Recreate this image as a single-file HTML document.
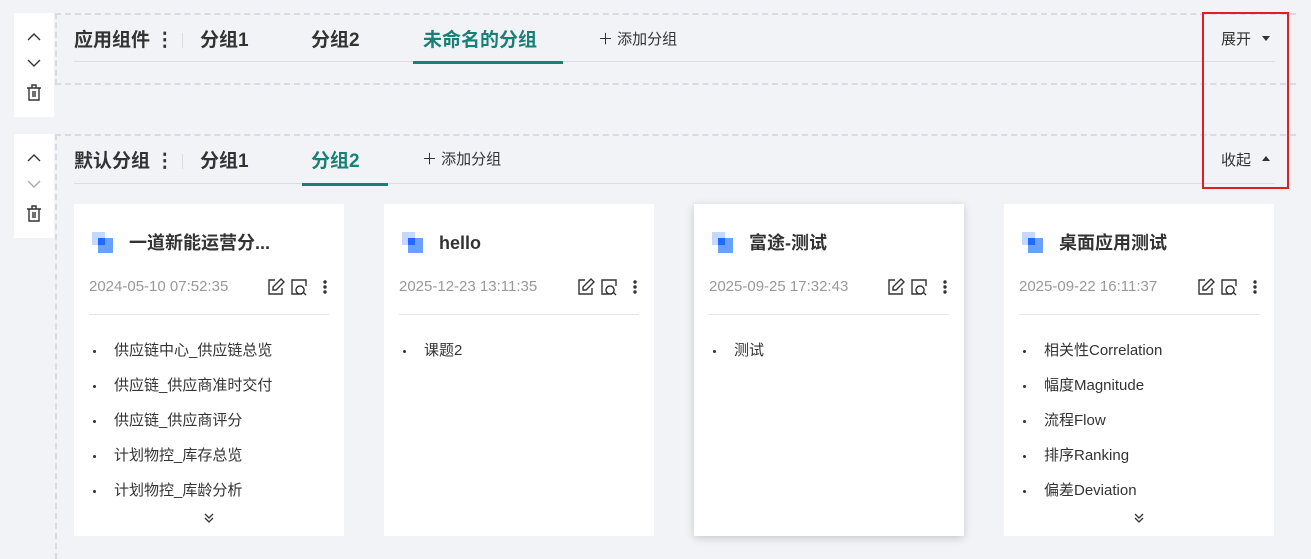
<!DOCTYPE html><html><head><meta charset="utf-8"><style>
*{box-sizing:border-box;margin:0;padding:0}
html{width:1311px;height:559px;overflow:hidden}
body{width:1311px;height:559px;background:#f2f3f7;font-family:"Liberation Sans","Noto Sans CJK SC",sans-serif;position:relative;overflow:hidden;color:#333}
.a{position:absolute}
.ctrl{background:#fff;width:40px;height:104px;left:14px}
.dash{border:2px dashed #d9dbe0;border-right:none}
.tab{font-size:19px;font-weight:bold;color:#333;line-height:24px}
.hl{height:1px;background:#dcdde0;left:74px;width:1201px}
.card{background:#fff;width:270px;height:332px;top:204px}
.card h3{position:absolute;left:55px;top:27px;font-size:18px;font-weight:bold;color:#333;line-height:24px}
.ic{position:absolute;left:18px;top:28px;width:22px;height:22px}
.dt{position:absolute;left:15px;top:73px;font-size:15px;color:#999;line-height:20px}
.sep{position:absolute;left:15px;right:15px;top:110px;height:1px;background:#e3e4e7}
.li{position:absolute;left:40px;font-size:15px;color:#333;line-height:20px}
.li:before{content:"";position:absolute;left:-21px;top:9px;width:3px;height:3px;border-radius:50%;background:#333}
</style></head><body>
<div class="a ctrl" style="top:13px"></div>
<div class="a ctrl" style="top:134px"></div>
<svg class="a" style="left:24px;top:30px" width="20" height="80" fill="none" stroke="#333" stroke-width="1.4"><path d="M4 10 L10 4 L16 10"/><path d="M4 30 L10 36 L16 30"/><path d="M3 58 H17 M8 58 V55 H12 V58 M5 58 V70 H15 V58 M9 61 V67 M11 61 V67"/></svg>
<svg class="a" style="left:24px;top:151px" width="20" height="80" fill="none" stroke-width="1.4"><path d="M4 10 L10 4 L16 10" stroke="#333"/><path d="M4 30 L10 36 L16 30" stroke="#aaa"/><path d="M3 58 H17 M8 58 V55 H12 V58 M5 58 V70 H15 V58 M9 61 V67 M11 61 V67" stroke="#333"/></svg>
<div class="a dash" style="left:55px;top:13px;width:1241px;height:72px"></div>
<div class="a dash" style="left:55px;top:134px;width:1241px;height:435px"></div>
<div class="a hl" style="top:61px"></div>
<div class="a hl" style="top:183px"></div>
<div class="a tab" style="left:74px;top:29px">应用组件 ⋮</div>
<div class="a" style="left:182px;top:33px;width:1px;height:15px;background:#ddd"></div>
<div class="a tab" style="left:200px;top:29px">分组1</div>
<div class="a tab" style="left:311px;top:29px">分组2</div>
<div class="a tab" style="left:423px;top:29px;color:#1a8077">未命名的分组</div>
<div class="a" style="left:413px;top:61px;width:150px;height:3px;background:#1a8077"></div>
<div class="a" style="left:598px;top:30px;font-size:15px;line-height:20px">＋ 添加分组</div>
<div class="a" style="left:1221px;top:30px;font-size:15px;line-height:20px">展开</div>
<svg class="a" style="left:1261px;top:35px" width="10" height="8"><path d="M1 1 H9 L5 6 Z" fill="#333"/></svg>
<div class="a tab" style="left:74px;top:150px">默认分组 ⋮</div>
<div class="a" style="left:182px;top:154px;width:1px;height:15px;background:#ddd"></div>
<div class="a tab" style="left:200px;top:150px">分组1</div>
<div class="a tab" style="left:311px;top:150px;color:#1a8077">分组2</div>
<div class="a" style="left:302px;top:183px;width:86px;height:3px;background:#1a8077"></div>
<div class="a" style="left:422px;top:150px;font-size:15px;line-height:20px">＋ 添加分组</div>
<div class="a" style="left:1221px;top:151px;font-size:15px;line-height:20px">收起</div>
<svg class="a" style="left:1261px;top:155px" width="10" height="8"><path d="M1 6 H9 L5 1 Z" fill="#333"/></svg>
<div class="a" style="left:1202px;top:12px;width:87px;height:177px;border:2px solid #e02020"></div>

<div class="a card" style="left:74px">
<svg class="ic" viewBox="0 0 22 22"><rect x="0" y="0" width="13" height="13" fill="#c5d9ff"/><rect x="6" y="6" width="15" height="15" fill="#6aa0ff"/><rect x="6" y="6" width="7" height="7" fill="#1f6bff"/></svg>
<h3>一道新能运营分...</h3><div class="dt">2024-05-10 07:52:35</div>
<svg class="a" style="left:193px;top:73px" width="62" height="20" fill="none" stroke="#333" stroke-width="1.4"><path d="M8 3 H2 V17 H15 V11 M14 2 L17 5 L9 13 H6 V10 Z"/><path d="M35 17 H25 V3 H39 V9 M33 9 a4 4 0 1 0 .1 0 M36 15 L39 18"/><circle cx="58" cy="5" r="1" fill="#333"/><circle cx="58" cy="10" r="1" fill="#333"/><circle cx="58" cy="15" r="1" fill="#333"/></svg>
<div class="sep"></div>
<div class="li" style="top:137px">供应链中心_供应链总览</div><div class="li" style="top:172px">供应链_供应商准时交付</div><div class="li" style="top:207px">供应链_供应商评分</div><div class="li" style="top:242px">计划物控_库存总览</div><div class="li" style="top:277px">计划物控_库龄分析</div>
<svg class="a" style="left:129px;top:308px" width="12" height="12" fill="none" stroke="#333" stroke-width="1.3"><path d="M2 2 L6 6 L10 2 M2 6 L6 10 L10 6"/></svg></div>

<div class="a card" style="left:384px">
<svg class="ic" viewBox="0 0 22 22"><rect x="0" y="0" width="13" height="13" fill="#c5d9ff"/><rect x="6" y="6" width="15" height="15" fill="#6aa0ff"/><rect x="6" y="6" width="7" height="7" fill="#1f6bff"/></svg>
<h3>hello</h3><div class="dt">2025-12-23 13:11:35</div>
<svg class="a" style="left:193px;top:73px" width="62" height="20" fill="none" stroke="#333" stroke-width="1.4"><path d="M8 3 H2 V17 H15 V11 M14 2 L17 5 L9 13 H6 V10 Z"/><path d="M35 17 H25 V3 H39 V9 M33 9 a4 4 0 1 0 .1 0 M36 15 L39 18"/><circle cx="58" cy="5" r="1" fill="#333"/><circle cx="58" cy="10" r="1" fill="#333"/><circle cx="58" cy="15" r="1" fill="#333"/></svg>
<div class="sep"></div><div class="li" style="top:137px">课题2</div></div>

<div class="a card" style="left:694px;box-shadow:0 2px 8px rgba(0,0,0,.18)">
<svg class="ic" viewBox="0 0 22 22"><rect x="0" y="0" width="13" height="13" fill="#c5d9ff"/><rect x="6" y="6" width="15" height="15" fill="#6aa0ff"/><rect x="6" y="6" width="7" height="7" fill="#1f6bff"/></svg>
<h3>富途-测试</h3><div class="dt">2025-09-25 17:32:43</div>
<svg class="a" style="left:193px;top:73px" width="62" height="20" fill="none" stroke="#333" stroke-width="1.4"><path d="M8 3 H2 V17 H15 V11 M14 2 L17 5 L9 13 H6 V10 Z"/><path d="M35 17 H25 V3 H39 V9 M33 9 a4 4 0 1 0 .1 0 M36 15 L39 18"/><circle cx="58" cy="5" r="1" fill="#333"/><circle cx="58" cy="10" r="1" fill="#333"/><circle cx="58" cy="15" r="1" fill="#333"/></svg>
<div class="sep"></div><div class="li" style="top:137px">测试</div></div>

<div class="a card" style="left:1004px">
<svg class="ic" viewBox="0 0 22 22"><rect x="0" y="0" width="13" height="13" fill="#c5d9ff"/><rect x="6" y="6" width="15" height="15" fill="#6aa0ff"/><rect x="6" y="6" width="7" height="7" fill="#1f6bff"/></svg>
<h3>桌面应用测试</h3><div class="dt">2025-09-22 16:11:37</div>
<svg class="a" style="left:193px;top:73px" width="62" height="20" fill="none" stroke="#333" stroke-width="1.4"><path d="M8 3 H2 V17 H15 V11 M14 2 L17 5 L9 13 H6 V10 Z"/><path d="M35 17 H25 V3 H39 V9 M33 9 a4 4 0 1 0 .1 0 M36 15 L39 18"/><circle cx="58" cy="5" r="1" fill="#333"/><circle cx="58" cy="10" r="1" fill="#333"/><circle cx="58" cy="15" r="1" fill="#333"/></svg>
<div class="sep"></div>
<div class="li" style="top:137px">相关性Correlation</div><div class="li" style="top:172px">幅度Magnitude</div><div class="li" style="top:207px">流程Flow</div><div class="li" style="top:242px">排序Ranking</div><div class="li" style="top:277px">偏差Deviation</div>
<svg class="a" style="left:129px;top:308px" width="12" height="12" fill="none" stroke="#333" stroke-width="1.3"><path d="M2 2 L6 6 L10 2 M2 6 L6 10 L10 6"/></svg></div>
</body></html>
